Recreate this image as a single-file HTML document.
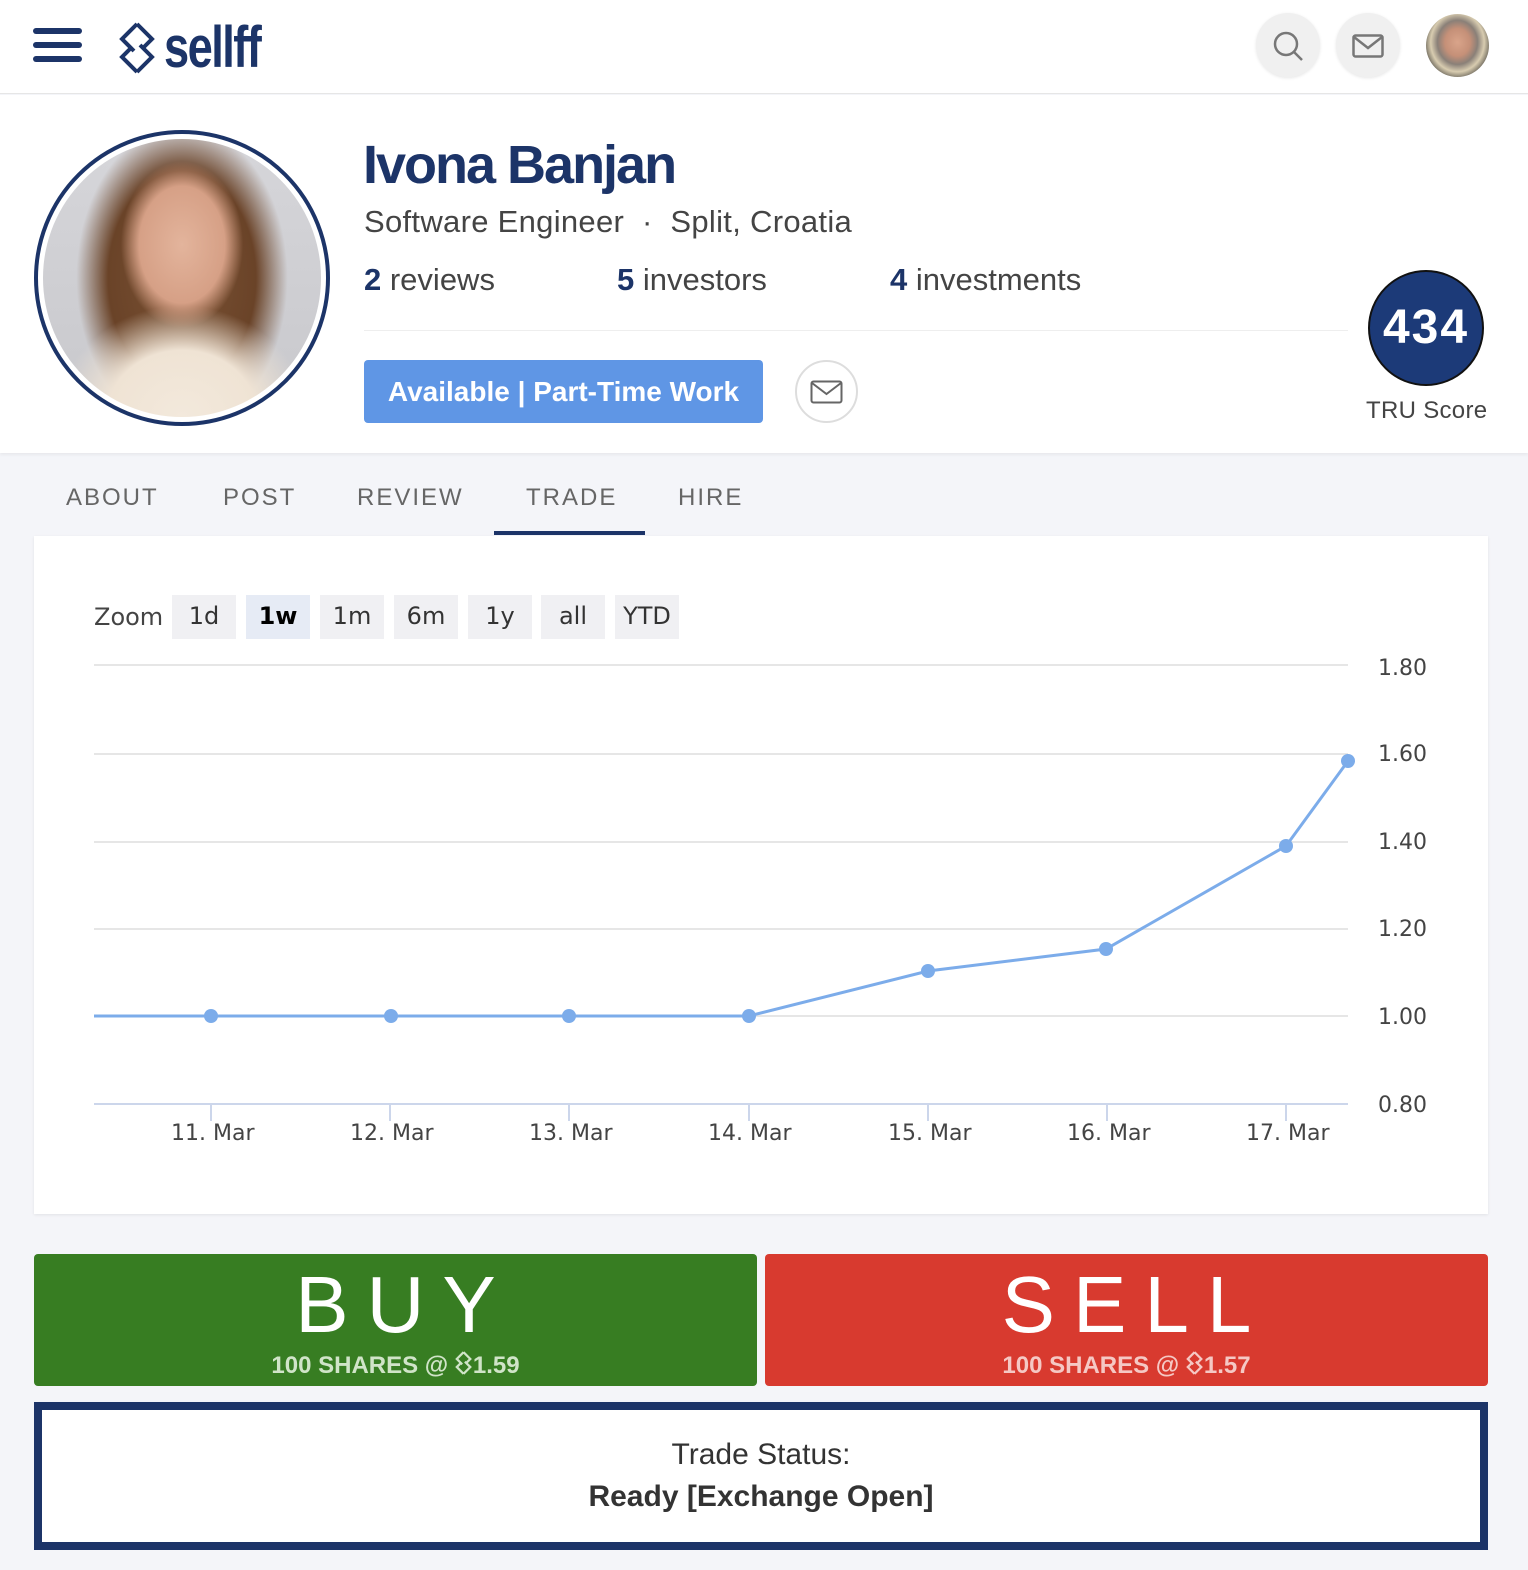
<!DOCTYPE html>
<html><head><meta charset="utf-8"><style>
*{box-sizing:border-box;margin:0;padding:0}
body{width:1528px;height:1570px;background:#f4f5f9;font-family:"Liberation Sans",sans-serif;position:relative;overflow:hidden}
.abs{position:absolute}
.hdr{left:0;top:0;width:1528px;height:94px;background:#fff;border-bottom:1px solid #e6e6e6}
.prof{left:0;top:95px;width:1528px;height:358px;background:#fff;box-shadow:0 2px 3px rgba(0,0,0,.05)}
.navy{color:#1c3468}
.tab{top:484px;font-size:24px;letter-spacing:2px;color:#666}
.card{left:34px;top:536px;width:1454px;height:678px;background:#fff;box-shadow:0 1px 3px rgba(0,0,0,.08)}
.zb{top:595px;height:44px;background:#f0f0f3;font-size:24px;color:#333;text-align:center;line-height:42px;font-family:"DejaVu Sans",sans-serif}
.yl{left:1378px;font-size:22px;color:#444;font-family:"DejaVu Sans",sans-serif}
.xl{top:1121px;font-size:22px;color:#444;font-family:"DejaVu Sans",sans-serif}
.btn{top:1254px;width:723px;height:132px;border-radius:4px;color:#fff;text-align:center}
.big{font-size:80px;letter-spacing:18px;line-height:90px;padding-top:6px;padding-left:18px}
.sub{font-size:24px;font-weight:bold;color:#d0e4c8}
.sub svg{vertical-align:-3px}
</style></head><body>
<div class="abs hdr"></div>
<svg class="abs" style="left:32px;top:26px" width="52" height="40"><g stroke="#1c3468" stroke-width="6" stroke-linecap="round"><line x1="4" y1="5" x2="47" y2="5"/><line x1="4" y1="19" x2="47" y2="19"/><line x1="4" y1="33" x2="47" y2="33"/></g></svg>
<svg class="abs" style="left:118px;top:22px" width="40" height="52" viewBox="0 0 40 52"><g fill="none" stroke="#1c3468" stroke-width="4"><path d="M19 2 L4 17 L16 29 M19 2 L34 17 L26 25"/><path d="M19 50 L4 35 L12 27 M19 50 L34 35 L22 23"/></g></svg>
<div class="abs navy" style="left:164px;top:14px;font-size:58px;font-weight:bold;letter-spacing:-2px;transform:scaleX(.78);transform-origin:left">sellff</div>
<div class="abs" style="left:1256px;top:13px;width:64px;height:64px;border-radius:50%;background:#f0f0f0;box-shadow:0 1px 3px rgba(0,0,0,.1)"></div>
<svg class="abs" style="left:1270px;top:28px" width="36" height="36"><circle cx="16" cy="16" r="11" fill="none" stroke="#777" stroke-width="2.5"/><line x1="24" y1="24" x2="32" y2="32" stroke="#777" stroke-width="2.5"/></svg>
<div class="abs" style="left:1336px;top:13px;width:64px;height:64px;border-radius:50%;background:#f0f0f0;box-shadow:0 1px 3px rgba(0,0,0,.1)"></div>
<svg class="abs" style="left:1352px;top:34px" width="32" height="24"><rect x="1.5" y="1.5" width="29" height="21" rx="2" fill="none" stroke="#777" stroke-width="2.5"/><path d="M2 3 L16 14 L30 3" fill="none" stroke="#777" stroke-width="2.5"/></svg>
<div class="abs" style="left:1426px;top:14px;width:63px;height:63px;border-radius:50%;background:radial-gradient(ellipse at 50% 45%,#d9a48a 0,#c59078 28%,#8a8078 45%,#d8ccb0 60%,#222 85%)"></div>

<div class="abs prof"></div>
<div class="abs" style="left:34px;top:130px;width:296px;height:296px;border-radius:50%;border:4px solid #1c3468;background:#fff;padding:5px"><div style="width:100%;height:100%;border-radius:50%;background:radial-gradient(ellipse 22% 30% at 50% 38%,#e3b49c 0,#d6a086 70%,transparent 100%),radial-gradient(ellipse 45% 40% at 50% 100%,#f3e9dc 0,#efe3d4 60%,transparent 100%),radial-gradient(ellipse 38% 55% at 50% 50%,#7a5234 0,#6a4328 70%,transparent 100%),linear-gradient(#d6d6da,#c8c8cc)"></div></div>
<div class="abs navy" style="left:363px;top:134px;font-size:54px;font-weight:bold;letter-spacing:-2px">Ivona Banjan</div>
<div class="abs" style="left:364px;top:204px;font-size:31px;color:#444;letter-spacing:.3px">Software Engineer &nbsp;·&nbsp; Split, Croatia</div>
<div class="abs" style="left:364px;top:262px;font-size:31px;color:#444"><b class="navy">2</b> reviews</div>
<div class="abs" style="left:617px;top:262px;font-size:31px;color:#444"><b class="navy">5</b> investors</div>
<div class="abs" style="left:890px;top:262px;font-size:31px;color:#444"><b class="navy">4</b> investments</div>
<div class="abs" style="left:364px;top:330px;width:984px;height:1px;background:#eee"></div>
<div class="abs" style="left:364px;top:360px;width:399px;height:63px;background:#5f96e5;border-radius:4px;color:#fff;font-size:28px;font-weight:bold;line-height:63px;text-align:center">Available | Part-Time Work</div>
<div class="abs" style="left:795px;top:360px;width:63px;height:63px;border-radius:50%;border:2px solid #ddd;background:#fff"></div>
<svg class="abs" style="left:810px;top:380px" width="33" height="24"><rect x="1.5" y="1.5" width="30" height="21" rx="2" fill="none" stroke="#666" stroke-width="2"/><path d="M2 3 L16.5 14 L31 3" fill="none" stroke="#666" stroke-width="2"/></svg>
<div class="abs" style="left:1368px;top:270px;width:116px;height:116px;border-radius:50%;background:#1c3a78;border:2px solid #111;color:#fff;font-size:48px;font-weight:bold;text-align:center;line-height:112px;letter-spacing:2px">434</div>
<div class="abs" style="left:1366px;top:397px;font-size:24px;color:#444;letter-spacing:.3px">TRU Score</div>

<div class="abs tab" style="left:66px">ABOUT</div>
<div class="abs tab" style="left:223px">POST</div>
<div class="abs tab" style="left:357px">REVIEW</div>
<div class="abs tab navy" style="left:526px">TRADE</div>
<div class="abs" style="left:494px;top:531px;width:151px;height:4px;background:#1c3468"></div>
<div class="abs tab" style="left:678px">HIRE</div>

<div class="abs card"></div>
<div class="abs" style="left:94px;top:603px;font-size:24px;color:#444;font-family:'DejaVu Sans',sans-serif">Zoom</div>
<div class="abs zb" style="left:172px;width:64px">1d</div>
<div class="abs zb" style="left:246px;width:64px;background:#e6ebf5;font-weight:bold;color:#000">1w</div>
<div class="abs zb" style="left:320px;width:64px">1m</div>
<div class="abs zb" style="left:394px;width:64px">6m</div>
<div class="abs zb" style="left:468px;width:64px">1y</div>
<div class="abs zb" style="left:541px;width:64px">all</div>
<div class="abs zb" style="left:615px;width:64px">YTD</div>
<svg class="abs" style="left:0;top:0" width="1528" height="1570">
<g stroke="#e6e6e6" stroke-width="2"><line x1="94" y1="665" x2="1348" y2="665"/><line x1="94" y1="754" x2="1348" y2="754"/><line x1="94" y1="842" x2="1348" y2="842"/><line x1="94" y1="929" x2="1348" y2="929"/><line x1="94" y1="1016" x2="1348" y2="1016"/></g>
<line x1="94" y1="1104" x2="1348" y2="1104" stroke="#ccd6eb" stroke-width="2"/>
<g stroke="#ccd6eb" stroke-width="2"><line x1="211" y1="1104" x2="211" y2="1121"/><line x1="390" y1="1104" x2="390" y2="1121"/><line x1="569" y1="1104" x2="569" y2="1121"/><line x1="749" y1="1104" x2="749" y2="1121"/><line x1="928" y1="1104" x2="928" y2="1121"/><line x1="1107" y1="1104" x2="1107" y2="1121"/><line x1="1286" y1="1104" x2="1286" y2="1121"/></g>
<polyline points="94,1016 211,1016 391,1016 569,1016 749,1016 928,971 1106,949 1286,846 1348,761" fill="none" stroke="#7cacea" stroke-width="3"/>
<g fill="#7cacea"><circle cx="211" cy="1016" r="7"/><circle cx="391" cy="1016" r="7"/><circle cx="569" cy="1016" r="7"/><circle cx="749" cy="1016" r="7"/><circle cx="928" cy="971" r="7"/><circle cx="1106" cy="949" r="7"/><circle cx="1286" cy="846" r="7"/><circle cx="1348" cy="761" r="7"/></g>
</svg>
<div class="abs yl" style="top:656px">1.80</div>
<div class="abs yl" style="top:742px">1.60</div>
<div class="abs yl" style="top:830px">1.40</div>
<div class="abs yl" style="top:917px">1.20</div>
<div class="abs yl" style="top:1005px">1.00</div>
<div class="abs yl" style="top:1093px">0.80</div>
<div class="abs xl" style="left:171px">11. Mar</div>
<div class="abs xl" style="left:350px">12. Mar</div>
<div class="abs xl" style="left:529px">13. Mar</div>
<div class="abs xl" style="left:708px">14. Mar</div>
<div class="abs xl" style="left:888px">15. Mar</div>
<div class="abs xl" style="left:1067px">16. Mar</div>
<div class="abs xl" style="left:1246px">17. Mar</div>

<div class="abs btn" style="left:34px;background:#377d22"><div class="big">BUY</div><div class="sub">100 SHARES @ <svg width="18" height="26" viewBox="0 0 40 52"><g fill="none" stroke="#d0e4c8" stroke-width="5"><path d="M19 2 L4 17 L16 29 M19 2 L34 17 L26 25"/><path d="M19 50 L4 35 L12 27 M19 50 L34 35 L22 23"/></g></svg>1.59</div></div>
<div class="abs btn" style="left:765px;background:#d83a2f"><div class="big">SELL</div><div class="sub" style="color:#f5c8c4">100 SHARES @ <svg width="18" height="26" viewBox="0 0 40 52"><g fill="none" stroke="#f5c8c4" stroke-width="5"><path d="M19 2 L4 17 L16 29 M19 2 L34 17 L26 25"/><path d="M19 50 L4 35 L12 27 M19 50 L34 35 L22 23"/></g></svg>1.57</div></div>
<div class="abs" style="left:34px;top:1402px;width:1454px;height:148px;border:8px solid #1c3468;background:#fff;text-align:center;font-size:30px;color:#333"><div style="margin-top:28px">Trade Status:</div><div style="font-weight:bold;margin-top:8px">Ready [Exchange Open]</div></div>
</body></html>
